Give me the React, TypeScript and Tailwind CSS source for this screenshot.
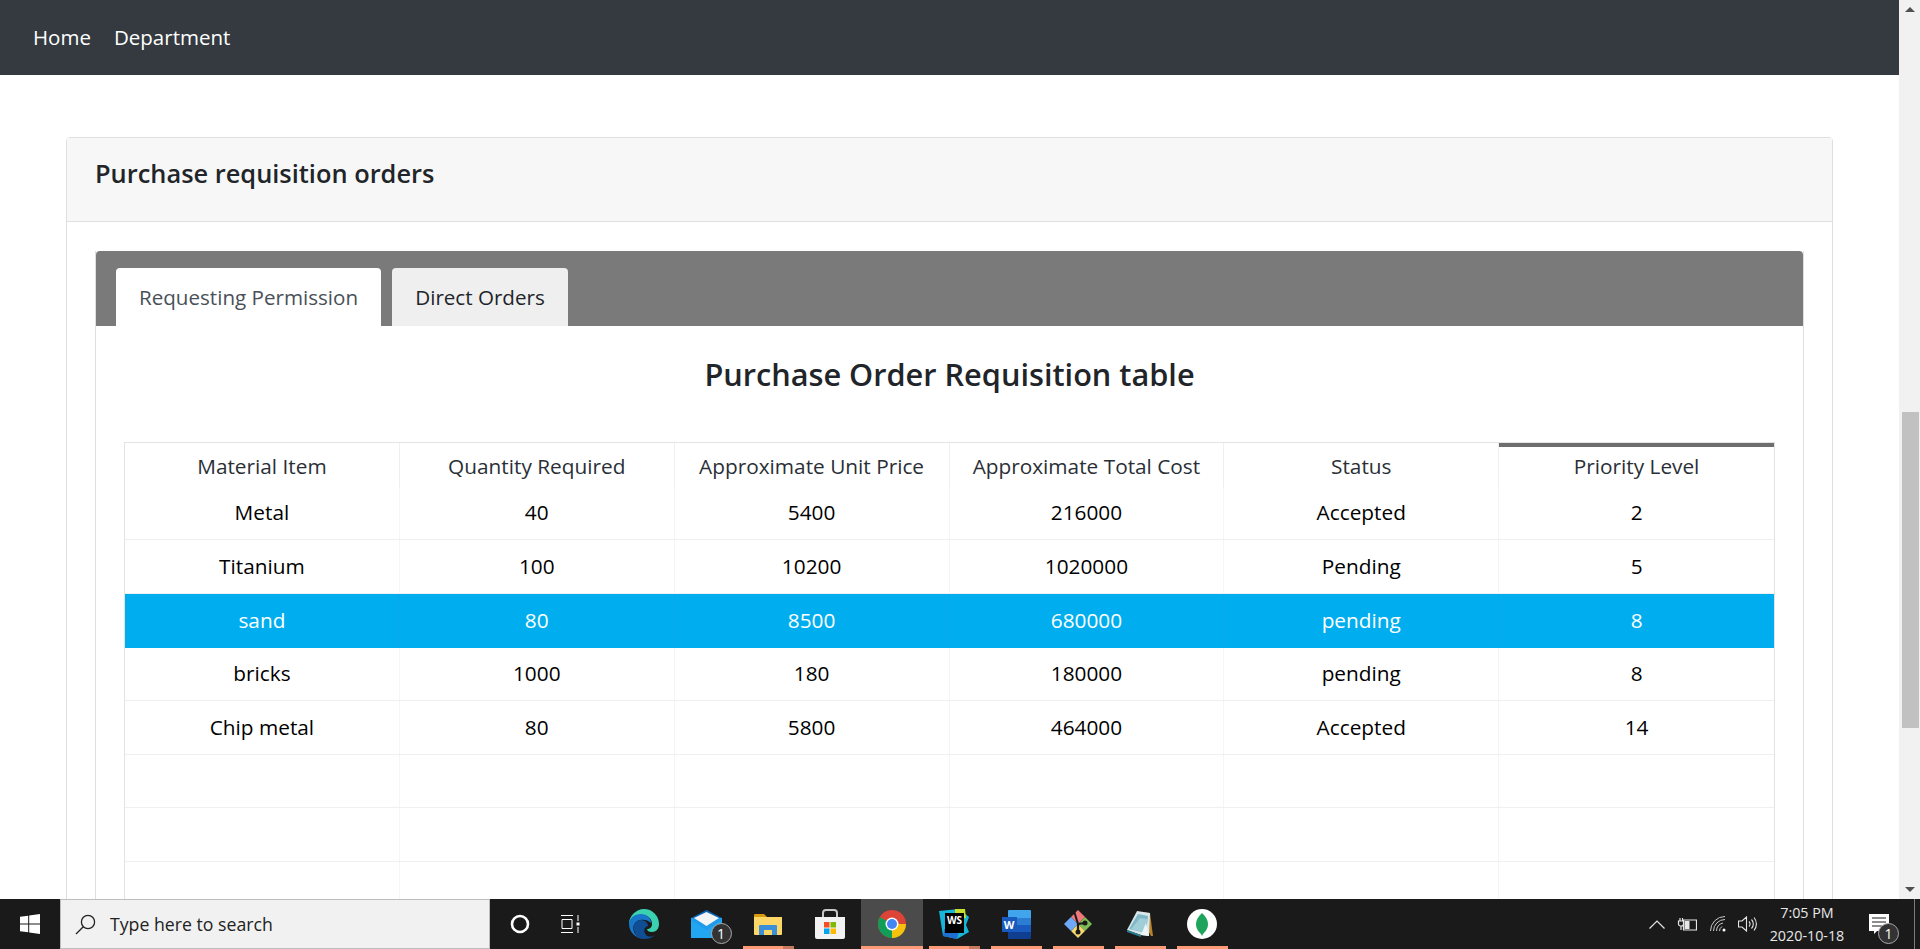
import type { ReactNode } from 'react';

const SANS = "font-['Open_Sans','Noto_Sans',sans-serif]";
const rows = [
  ['Metal', '40', '5400', '216000', 'Accepted', '2'],
  ['Titanium', '100', '10200', '1020000', 'Pending', '5'],
  ['sand', '80', '8500', '680000', 'pending', '8'],
  ['bricks', '1000', '180', '180000', 'pending', '8'],
  ['Chip metal', '80', '5800', '464000', 'Accepted', '14'],
  ['', '', '', '', '', ''],
  ['', '', '', '', '', ''],
  ['', '', '', '', '', ''],
];
const heads = ['Material Item', 'Quantity Required', 'Approximate Unit Price', 'Approximate Total Cost', 'Status', 'Priority Level'];

export default function App() {
  return (
    <div className={`h-[949px] flex flex-col overflow-hidden bg-white ${SANS}`}>
      <div className="h-[899px] flex overflow-hidden">
        <div className="flex-1 min-w-0">
          <nav className="h-[75px] bg-[#343a40] pl-[33px] flex items-center gap-[23px] text-[20.5px] text-white">
            <span>Home</span><span>Department</span>
          </nav>
          <div className="mt-[62px] mx-[66px] border border-[#dfdfdf] rounded-[4px]">
            <div className="h-[84px] bg-[#f7f7f7] border-b border-[#dfdfdf] pl-[28px] pb-[12px] flex items-center text-[25.4px] font-semibold text-[#212529]">Purchase requisition orders</div>
            <div className="mt-[29px] mx-[28px] border-x border-[#dfdfdf]">
              <div className="h-[75px] bg-[#7a7a7a] rounded-t-[4px] flex items-end pl-[20px] gap-[11px] text-[20.6px]">
                <div className="w-[265px] h-[58px] bg-white rounded-t-[4px] flex items-center justify-center text-[#495057]">Requesting Permission</div>
                <div className="w-[176px] h-[58px] bg-[#efefef] rounded-t-[4px] flex items-center justify-center text-[#212529]">Direct Orders</div>
              </div>
              <h2 className="h-[116px] flex items-center justify-center text-[30.7px] font-semibold text-[#212529] pb-[19px]">Purchase Order Requisition table</h2>
              <div className="mx-[28px] border-x border-t border-[#e3e3e3] text-[20.8px]">
                <div className="grid grid-cols-6 h-[44px] text-[#2a2f36]">
                  {heads.map((h, i) => (
                    <div key={h} className={`flex items-center justify-center border-[#efefef] ${i < 5 ? 'border-r pt-[4px]' : ''} ${i === 5 ? 'border-t-[4px] border-t-[#6e6e6e]' : ''}`}>{h}</div>
                  ))}
                </div>
                {rows.map((r, ri) => (
                  <div key={ri} className={`grid grid-cols-6 border-b ${ri === 0 ? 'h-[52.5px]' : ri === 1 ? 'h-[54.5px]' : 'h-[53.5px]'} ${ri === 2 ? 'bg-[#00aeef] text-white border-[#00aeef]' : 'border-[#f0f0f0] text-black'}`}>
                    {r.map((c, i) => (
                      <div key={i} className={`flex items-center justify-center ${i < 5 ? (ri === 2 ? 'border-r border-[#0aa8e6]' : 'border-r border-[#f5f5f5]') : ''}`}>{c}</div>
                    ))}
                  </div>
                ))}
              </div>
            </div>
          </div>
        </div>
        <div className="w-[21px] bg-[#f1f1f1] flex flex-col items-center pl-[1px]">
          <div className="h-[412px] w-full flex justify-center pt-[7px]">
            <svg width="10" height="5" viewBox="0 0 10 5"><path d="M5 0l5 5H0z" fill="#505050" /></svg>
          </div>
          <div className="h-[316px] w-[17px] bg-[#c1c1c1]" />
          <div className="flex-1 w-full flex items-end justify-center pb-[7px]">
            <svg width="10" height="5" viewBox="0 0 10 5"><path d="M0 0h10L5 5z" fill="#505050" /></svg>
          </div>
        </div>
      </div>
      <Taskbar />
    </div>
  );
}

function Slot({ children, line, dark, active }: { children: ReactNode; line?: boolean; dark?: boolean; active?: boolean }) {
  return (
    <div className={`relative w-[62px] h-full flex items-center justify-center ${active ? 'bg-[#4b4b4b]' : ''}`}>
      {children}
      {line && (
        <div className={`absolute bottom-0 h-[3px] flex ${active ? 'left-0 right-0' : 'left-[6px] right-[5px]'}`}>
          <div className="flex-1 bg-[#ff9a76]" />
          {dark && <div className="w-[11px] bg-[#c67a60]" />}
        </div>
      )}
    </div>
  );
}

function Badge({ className }: { className: string }) {
  return (
    <div className={`absolute w-[21px] h-[21px] rounded-full border border-[#a9a9a9] bg-[#333] text-white text-[14px] flex items-center justify-center ${className}`}>1</div>
  );
}

function Taskbar() {
  return (
    <div className="relative h-[50px] bg-[#1a1a1a] flex items-center text-white">
      <div className="w-[60px] flex justify-center">
        <svg width="20" height="20" viewBox="0 0 20 20" fill="#fff"><path d="M0 2.8 8.2 1.7v7.8H0zM9.2 1.6 20 0v9.5H9.2zM0 10.5h8.2v7.8L0 17.2zM9.2 10.500H20V20L9.2 18.400z" /></svg>
      </div>
      <div className="w-[430px] h-[50px] bg-[#f1f1f1] border border-[#bdbdbd] flex items-center pl-[14px] text-[#222] text-[17.7px]">
        <svg width="21" height="21" viewBox="0 0 21 21" fill="none" stroke="#222" strokeWidth="1.3"><circle cx="13" cy="8" r="6.600" /><path d="M8.300 12.700 1 20" /></svg>
        <span className="ml-[14px]">Type here to search</span>
      </div>
      <div className="w-[60px] flex justify-center">
        <svg width="20" height="20" viewBox="0 0 20 20" fill="none" stroke="#fff" strokeWidth="2.600"><circle cx="10" cy="10" r="8" /></svg>
      </div>
      <div className="w-[40px] flex justify-center">
        <svg width="20" height="20" viewBox="0 0 20 20" fill="none" stroke="#fff" strokeWidth="1"><path d="M1 1.500h12M2 5.500h10v9H2zM1 18.500h12M18 1v6M18 13v6" /><rect x="16.500" y="8.500" width="3" height="3" fill="#fff" stroke="none" /></svg>
      </div>
      <div className="w-[23px]" />
      <Slot>
        <svg width="32" height="32" viewBox="0 0 32 32">
          <path d="M16 1a15 15 0 0 1 15 15c0 5-3 8-7 8-3 0-5-1-5-3 3 0 5-2 5-5 0-6-5-9-10-9C8 7 3 10 1 16 1 8 8 1 16 1z" fill="#3bd0b0" />
          <path d="M1 16c0-6 6-10 12-10 6 0 10 4 10 9-3-3-7-4-11-3-5 1-8 6-6 12 2 4 6 7 10 7C8 31 1 24 1 16z" fill="#1877c9" />
          <path d="M6 22c-1-6 2-10 7-10 4 0 7 3 7 6-4 1-5 5-2 9 2 2 6 2 9 0-3 3-7 4-11 4-5 0-9-4-10-9z" fill="#0f4e94" />
        </svg>
      </Slot>
      <Slot>
        <div className="relative w-[31px] h-[28px]">
          <svg width="31" height="28" viewBox="0 0 31 28">
            <path d="M0 8 15.500 0 31 8v20H0z" fill="#0a64b8" />
            <path d="M0 8h31v20H0z" fill="#1e9bea" />
            <path d="M3 8 15.500 2 28 8l-12.500 8z" fill="#f4f4f4" />
            <path d="M0 10 15.500 20 31 10v18H0z" fill="#22a6f2" />
          </svg>
          <Badge className="left-[20px] top-[13px]" />
        </div>
      </Slot>
      <Slot line dark>
        <svg width="28" height="22" viewBox="0 0 28 22">
          <path d="M0 2a1 1 0 0 1 1-1h9l3 3h-13z" fill="#d89a0d" />
          <path d="M0 4h28v17a1 1 0 0 1-1 1H1a1 1 0 0 1-1-1z" fill="#fcd667" />
          <path d="M5 22V13a1 1 0 0 1 1-1h16a1 1 0 0 1 1 1v9h-5v-5h-8v5z" fill="#3b8fd8" />
        </svg>
      </Slot>
      <Slot>
        <svg width="30" height="30" viewBox="0 0 30 30">
          <path d="M8 9V4a3 3 0 0 1 3-3h8a3 3 0 0 1 3 3v5" fill="none" stroke="#c8c8c8" strokeWidth="2" />
          <path d="M0 8h30v20a2 2 0 0 1-2 2H2a2 2 0 0 1-2-2z" fill="#f2f2f2" />
          <rect x="9" y="13" width="5.500" height="5.500" fill="#f25022" />
          <rect x="15.500" y="13" width="5.500" height="5.500" fill="#7fba00" />
          <rect x="9" y="19.500" width="5.500" height="5.500" fill="#00a4ef" />
          <rect x="15.500" y="19.500" width="5.500" height="5.500" fill="#ffb900" />
        </svg>
      </Slot>
      <Slot line active>
        <svg width="28" height="28" viewBox="0 0 28 28">
          <circle cx="14" cy="14" r="14" fill="#db4437" />
          <path d="M14 14 26.100 21A14 14 0 0 1 14 28 14 14 0 0 1 1.900 7z" fill="#0f9d58" />
          <path d="M14 14h14A14 14 0 0 1 14 28z" fill="#f4c20d" />
          <circle cx="14" cy="14" r="6.500" fill="#fff" />
          <circle cx="14" cy="14" r="5" fill="#4285f4" />
        </svg>
      </Slot>
      <Slot line dark>
        <div className="relative w-[30px] h-[30px]">
          <svg width="30" height="30" viewBox="0 0 30 30">
            <path d="M0 2 20 0l10 8-3 8 3 7-12 7-14-3z" fill="#17b5d8" />
            <path d="M16 0h10l1 9-11 1z" fill="#c7df2f" />
            <path d="M5 20l15 2-2 8-14-3z" fill="#1f6fd0" />
          </svg>
          <div className="absolute left-[6px] top-[4px] w-[19px] h-[20px] bg-black text-white text-[10px] font-bold leading-[14px] text-center">WS</div>
        </div>
      </Slot>
      <Slot line>
        <div className="relative w-[29px] h-[29px]">
          <svg width="29" height="29" viewBox="0 0 29 29">
            <path d="M6 1a1 1 0 0 1 1-1h21a1 1 0 0 1 1 1v7H6z" fill="#41a5ee" />
            <path d="M6 8h23v7H6z" fill="#2b7cd3" />
            <path d="M6 15h23v7H6z" fill="#185abd" />
            <path d="M6 22h23v6a1 1 0 0 1-1 1H7a1 1 0 0 1-1-1z" fill="#103f91" />
          </svg>
          <div className="absolute left-0 top-[7px] w-[15px] h-[15px] bg-[#185abd] text-white text-[11px] font-bold leading-[15px] text-center">W</div>
        </div>
      </Slot>
      <Slot line>
        <svg width="30" height="30" viewBox="0 0 30 30">
          <path d="M15 1l7 7-7 7-7-7z" fill="#f0787a" />
          <path d="M22 8l7 7-7 7-7-7z" fill="#7dbb57" />
          <path d="M15 15l7 7-7 7-7-7z" fill="#f5d76e" />
          <path d="M8 8l7 7-7 7-7-7z" fill="#6fa8f5" />
          <path d="M11 2l4 13" stroke="#1a1a1a" strokeWidth="2" />
          <path d="M15 15l7-1M15 15v8" stroke="#1a1a1a" strokeWidth="2.200" />
          <circle cx="22" cy="14" r="2.500" fill="#1a1a1a" />
          <circle cx="15" cy="23" r="2.500" fill="#1a1a1a" />
        </svg>
      </Slot>
      <Slot line>
        <svg width="28" height="28" viewBox="0 0 28 28">
          <path d="M12 2 24 3l3 23-2 0z" fill="#b9812a" />
          <path d="M11 1l13 2-1 23-8-1L1 20z" fill="#d7e7ea" />
          <path d="M12 4l10 2-2 17L3 19z" fill="#7fb7c6" />
          <path d="M14 8l7 1-1 14-15-4z" fill="#a8d3dc" opacity=".8" />
          <path d="M20 13l3 13-8-1z" fill="#eef5f6" />
          <path d="M1 20l14 5 0 2-14-5z" fill="#2a7f95" />
        </svg>
      </Slot>
      <Slot line>
        <svg width="30" height="30" viewBox="0 0 30 30">
          <circle cx="15" cy="15" r="15" fill="#fff" />
          <path d="M15 4c4 4 6 7 6 11 0 5-3 8-5 10l-1 2-1-2c-2-2-5-5-5-10 0-4 2-7 6-11z" fill="#1fa55b" />
        </svg>
      </Slot>
      <div className="flex-1" />
      <svg width="16" height="9" viewBox="0 0 16 9" fill="none" stroke="#e6e6e6" strokeWidth="1.200"><path d="M.5 8.500 8 1l7.500 7.500" /></svg>
      <svg className="ml-[12px]" width="20" height="14" viewBox="0 0 20 14" fill="none" stroke="#e6e6e6" strokeWidth="1.200"><path d="M6.500 3h13v10h-13zM3 1v3M5.500 1v3M1.500 4h5v3a2 2 0 0 1-2 2h-1a2 2 0 0 1-2-2zM4 9v4" /><rect x="7.500" y="4" width="5" height="8" fill="#e6e6e6" stroke="none" /></svg>
      <svg className="ml-[13px]" width="16" height="16" viewBox="0 0 16 16" fill="none" stroke="#c9c9c9" strokeWidth="1"><path d="M.5 15A14.500 14.500 0 0 1 15 .5M3.500 15A11.500 11.500 0 0 1 15 3.500M6.500 15A8.500 8.500 0 0 1 13 7M9.500 15A5.500 5.500 0 0 1 12 10.500" /><circle cx="14" cy="14" r="1.500" fill="#fff" stroke="none" /></svg>
      <svg className="ml-[12px]" width="20" height="16" viewBox="0 0 20 16" fill="none" stroke="#e6e6e6" strokeWidth="1.100"><path d="M.5 5H4L8.500 1v14L4 11H.5zM11 5.500a3.500 3.500 0 0 1 0 5M13.500 3.500a6.500 6.500 0 0 1 0 9M16 1.500a10 10 0 0 1 0 13" /></svg>
      <div className="w-[80px] ml-[9px] flex flex-col items-center text-[14.300px] leading-[23px] text-[#e8e8e8]">
        <span>7:05 PM</span>
        <span>2020-10-18</span>
      </div>
      <div className="relative ml-[22px] mr-[31px] w-[20px] h-[20px]">
        <svg width="20" height="20" viewBox="0 0 20 20"><path d="M0 0h20v17H8l-3 3v-3H0z" fill="#fff" /><path d="M3 4h14M3 8h14M3 12h10" stroke="#1a1a1a" strokeWidth="1" /></svg>
        <Badge className="left-[9px] top-[9px]" />
      </div>
      <div className="absolute right-[5px] top-0 w-px h-[50px] bg-[#7a7a7a]" />
    </div>
  );
}
